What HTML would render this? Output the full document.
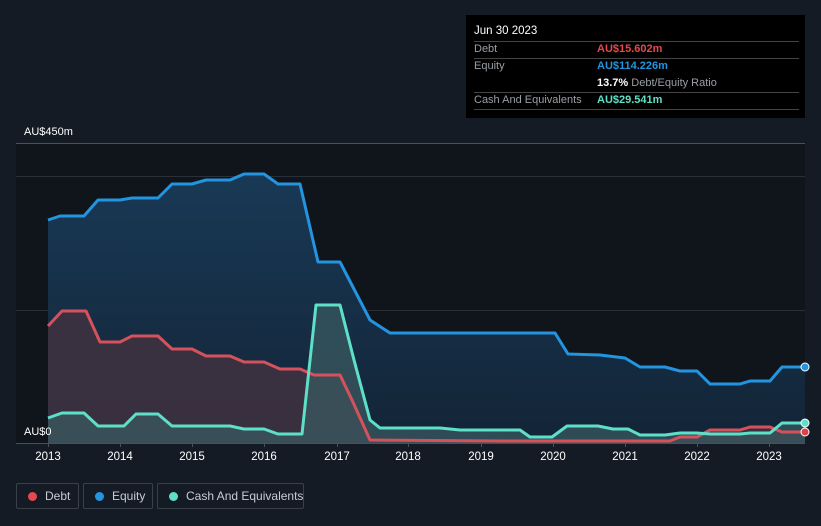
<!DOCTYPE html>
<html><head><style>
html,body{margin:0;width:821px;height:526px;overflow:hidden}
body{background:#151b25;font-family:"Liberation Sans",sans-serif;position:relative}
.tt{position:absolute;left:466px;top:15px;width:339px;height:103px;background:#000;color:#fff;font-size:11px}
.tt .r{position:absolute;left:8px;width:325px;border-top:1px solid #444}
.lab{color:#9a9ea6}
.leg{position:absolute;top:483px;height:26px;border:1px solid #3a404a;border-radius:2px;color:#c9ccd2;font-size:12px;line-height:24px;box-sizing:border-box;white-space:nowrap}
.leg i{position:absolute;left:11px;top:8px;width:9px;height:9px;border-radius:50%}
.leg span{position:absolute;left:28px;white-space:nowrap}
</style></head><body>
<svg width="821" height="526" style="position:absolute;left:0;top:0">
<defs>
<linearGradient id="ge" x1="0" y1="0" x2="0" y2="1"><stop offset="0" stop-color="#1a3d5c"/><stop offset="1" stop-color="#13263a"/></linearGradient>
</defs>
<rect x="16" y="143" width="789" height="300" fill="#10141b"/>
<line x1="16" y1="143.5" x2="805" y2="143.5" stroke="#4a4f58"/>
<line x1="16" y1="176.5" x2="805" y2="176.5" stroke="#2a2f38"/>
<line x1="16" y1="310.5" x2="805" y2="310.5" stroke="#2a2f38"/>
<path d="M48,220 L60,216 84,216 98,200 120,200 132,198 158,198 172,184 192,184 206,180 230,180 244,174 264,174 278,184 300,184 318,262 340,262 370,320 390,333 420,333 520,333 555,333 568,354 600,355 625,358 640,367 665,367 680,371 697,371 710,384 740,384 750,381 770,381 782,367 805,367 L805,443 48,443Z" fill="url(#ge)" opacity="0.9"/>
<path d="M48,326 L62,311 86,311 100,342 120,342 132,336 158,336 172,349 192,349 206,356 230,356 244,362 264,362 280,369 300,369 314,375 340,375 352,400 370,440 500,441 670,441 680,437 697,437 710,430 740,430 750,427 770,427 782,432 805,432 L805,443 48,443Z" fill="#3d3140" opacity="0.9"/>
<path d="M48,418 L62,413 84,413 98,426 124,426 136,414 158,414 172,426 230,426 244,429 264,429 278,434 302,434 316,305 340,305 354,360 370,420 380,428 440,428 460,430 520,430 530,437 552,437 567,426 598,426 613,429 628,429 640,435 665,435 680,433 697,433 710,434 740,434 750,433 770,433 782,423 805,423 L805,443 48,443Z" fill="#3a5a60" opacity="0.75"/>
<g fill="none" stroke-width="3" stroke-linejoin="round">
<path d="M48,220 L60,216 84,216 98,200 120,200 132,198 158,198 172,184 192,184 206,180 230,180 244,174 264,174 278,184 300,184 318,262 340,262 370,320 390,333 420,333 520,333 555,333 568,354 600,355 625,358 640,367 665,367 680,371 697,371 710,384 740,384 750,381 770,381 782,367 805,367" stroke="#2394df"/>
<path d="M48,326 L62,311 86,311 100,342 120,342 132,336 158,336 172,349 192,349 206,356 230,356 244,362 264,362 280,369 300,369 314,375 340,375 352,400 370,440 500,441 670,441 680,437 697,437 710,430 740,430 750,427 770,427 782,432 805,432" stroke="#d5525c"/>
<path d="M48,418 L62,413 84,413 98,426 124,426 136,414 158,414 172,426 230,426 244,429 264,429 278,434 302,434 316,305 340,305 354,360 370,420 380,428 440,428 460,430 520,430 530,437 552,437 567,426 598,426 613,429 628,429 640,435 665,435 680,433 697,433 710,434 740,434 750,433 770,433 782,423 805,423" stroke="#5ee0c8"/>
</g>
<line x1="16" y1="443.5" x2="805" y2="443.5" stroke="#4a4f58"/>
<g stroke="#4a4f58"><line x1="48.5" y1="443" x2="48.5" y2="447"/><line x1="120.5" y1="443" x2="120.5" y2="447"/><line x1="192.5" y1="443" x2="192.5" y2="447"/><line x1="264.5" y1="443" x2="264.5" y2="447"/><line x1="337.5" y1="443" x2="337.5" y2="447"/><line x1="408.5" y1="443" x2="408.5" y2="447"/><line x1="481.5" y1="443" x2="481.5" y2="447"/><line x1="553.5" y1="443" x2="553.5" y2="447"/><line x1="625.5" y1="443" x2="625.5" y2="447"/><line x1="697.5" y1="443" x2="697.5" y2="447"/><line x1="769.5" y1="443" x2="769.5" y2="447"/></g>
<circle cx="805" cy="367" r="4" fill="#2394df" stroke="#fff" stroke-width="1"/>
<circle cx="805" cy="423" r="4" fill="#5ee0c8" stroke="#fff" stroke-width="1"/>
<circle cx="805" cy="432" r="4" fill="#e04048" stroke="#fff" stroke-width="1"/>
<g fill="#fff" font-size="11" font-family="Liberation Sans, sans-serif">
<text x="24" y="135">AU$450m</text>
<text x="24" y="435">AU$0</text>
<g text-anchor="middle" font-size="11.5"><text x="48" y="460">2013</text><text x="120" y="460">2014</text><text x="192" y="460">2015</text><text x="264" y="460">2016</text><text x="337" y="460">2017</text><text x="408" y="460">2018</text><text x="481" y="460">2019</text><text x="553" y="460">2020</text><text x="625" y="460">2021</text><text x="697" y="460">2022</text><text x="769" y="460">2023</text></g>
</g>
</svg>
<div class="tt">
<div style="position:absolute;left:8px;top:10px;font-size:11.5px">Jun 30 2023</div>
<div class="r" style="top:26px"></div>
<div class="lab" style="position:absolute;left:8px;top:28px">Debt</div><div style="position:absolute;left:131px;top:28px;color:#e5484f;font-weight:bold">AU$15.602m</div>
<div class="r" style="top:43px"></div>
<div class="lab" style="position:absolute;left:8px;top:45px">Equity</div><div style="position:absolute;left:131px;top:45px;color:#2394df;font-weight:bold">AU$114.226m</div>
<div style="position:absolute;left:131px;top:62px"><b>13.7%</b> <span class="lab">Debt/Equity Ratio</span></div>
<div class="r" style="top:77px"></div>
<div class="lab" style="position:absolute;left:8px;top:79px">Cash And Equivalents</div><div style="position:absolute;left:131px;top:79px;color:#5ee0c8;font-weight:bold">AU$29.541m</div>
<div class="r" style="top:94px"></div>
</div>
<div class="leg" style="left:16px;width:63px"><i style="background:#e5484f"></i><span>Debt</span></div>
<div class="leg" style="left:83px;width:70px"><i style="background:#2394df"></i><span>Equity</span></div>
<div class="leg" style="left:157px;width:147px"><i style="background:#5ee0c8"></i><span>Cash And Equivalents</span></div>
</body></html>
